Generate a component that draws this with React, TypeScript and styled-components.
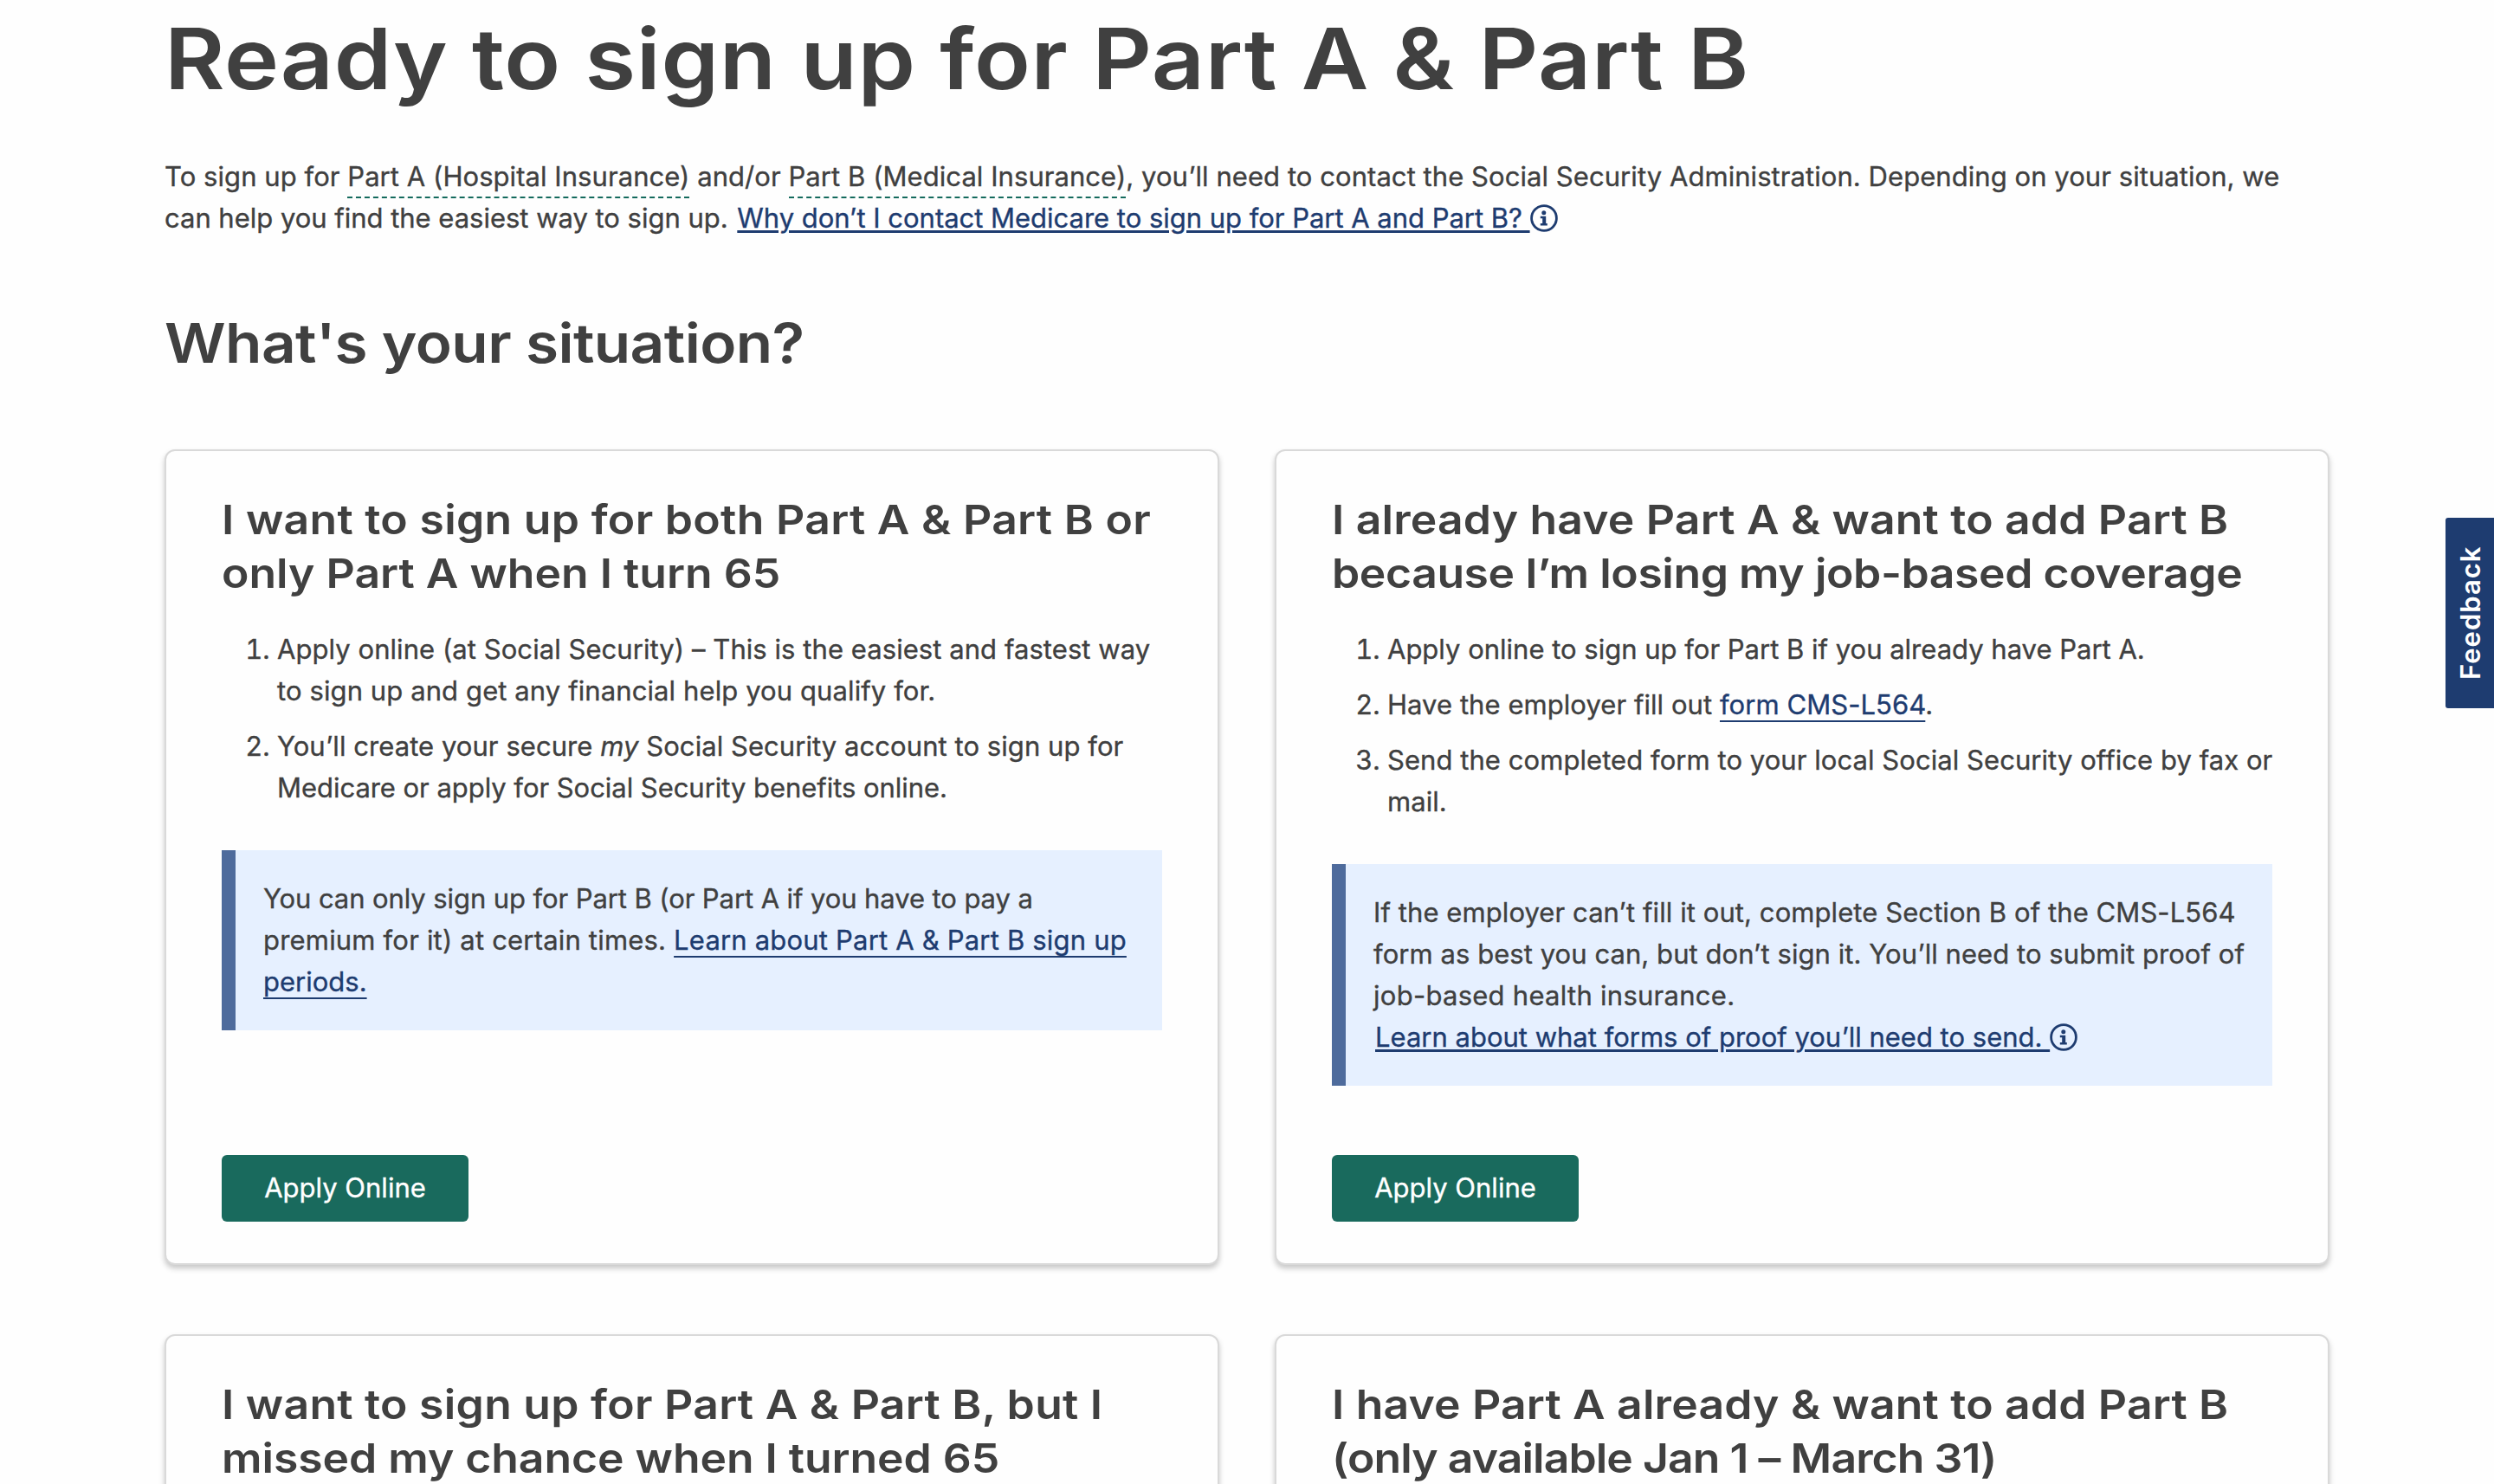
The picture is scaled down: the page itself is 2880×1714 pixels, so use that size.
import { ReactNode } from 'react';
import styled, { createGlobalStyle } from 'styled-components';

const GlobalStyle = createGlobalStyle`
  * {
    box-sizing: border-box;
  }

  body {
    margin: 0;
    background: #fefefe;
    color: #404040;
    font-family: Inter, 'Liberation Sans', sans-serif;
    font-size: 31px;
    line-height: 48px;
    -webkit-text-stroke: 0.35px;
  }
`;

const Page = styled.main`
  height: 1714px;
  padding: 0 190px;
  overflow: hidden;
`;

const Title = styled.h1`
  margin: 0;
  padding-top: 8px;
  font-size: 97px;
  font-weight: 600;
  line-height: 120px;
`;

const Intro = styled.p`
  margin: 52px 0 0;
`;

// every line breaks at a fixed place, $track is the letter spacing
const Line = styled.span<{ $track?: number }>`
  display: block;
  white-space: nowrap;
  letter-spacing: ${({ $track = 0.06 }) => $track}px;
`;

const HeadingLine = styled(Line)`
  transform: scaleX(1.1);
  transform-origin: left;
  -webkit-text-stroke: 0;
`;

const Term = styled.span`
  display: inline-block;
  height: 49px;
  margin-bottom: -1px;
  border-bottom: 2px dashed #146a5d;
`;

const TextLink = styled.a`
  color: #1e3c70;
  text-decoration: underline;
  text-decoration-thickness: 2px;
  text-underline-offset: 7px;
`;

const HelpLink = styled(TextLink)`
  margin-left: 2px;
  text-decoration-thickness: 3px;
  text-underline-offset: 3px;
`;

const InfoSvg = styled.svg`
  width: 32px;
  height: 32px;
  vertical-align: -5px;
`;

const Subtitle = styled.h2`
  margin: 80px 0 0;
  font-size: 63px;
  font-weight: 600;
  line-height: 80px;
`;

const Cards = styled.div`
  display: grid;
  grid-template-columns: repeat(2, minmax(0, 1fr));
  grid-template-rows: 942px 942px;
  gap: 80px 64px;
  margin-top: 83px;
`;

const Card = styled.section`
  display: flex;
  flex-direction: column;
  align-items: flex-start;
  padding: 48px 64px;
  background: #fefefe;
  border: 2px solid #d9d9d9;
  border-radius: 12px;
  box-shadow: 0 4px 6px rgba(0, 0, 0, 0.22);
`;

const CardTitle = styled.h3`
  margin: 0;
  font-size: 47px;
  font-weight: 600;
  line-height: 62px;
`;

const Steps = styled.ol`
  display: flex;
  flex-direction: column;
  gap: 16px;
  margin: 33px 0 0;
  padding: 0 0 0 64px;
`;

const Notice = styled.div`
  width: 100%;
  margin-top: 48px;
  padding: 32px;
  background: #e6f0ff;
  border-left: 16px solid #4e6b9c;
`;

const ApplyButton = styled.button`
  width: 285px;
  height: 77px;
  margin-top: auto;
  padding: 0 0 2px;
  background: #196a5d;
  border: none;
  border-radius: 6px;
  color: #fff;
  font: inherit;
`;

const Feedback = styled.button`
  position: absolute;
  top: 598px;
  right: 0;
  width: 56px;
  height: 220px;
  padding: 0;
  background: #1e3c70;
  border: none;
  border-radius: 0 3px 3px 0;
  color: #fff;
  font-family: inherit;
  font-size: 31px;
  font-weight: 600;
  letter-spacing: 1px;
  writing-mode: vertical-rl;
  rotate: 180deg;
  -webkit-text-stroke: 0;
`;

function InfoIcon() {
  return (
    <InfoSvg viewBox="0 0 32 32" fill="none" stroke="#1e3c70">
      <circle cx="16" cy="16" r="14.4" strokeWidth="2.8" />
      <circle cx="15.8" cy="9.8" r="2.5" fill="#1e3c70" stroke="none" />
      <path d="M11.8 13.8h6.4v8.2h1.6v2.4h-8v-2.4h2.4v-5.8h-2.4z" fill="#1e3c70" stroke="none" />
    </InfoSvg>
  );
}

type CardProps = {
  title: ReactNode;
  steps?: ReactNode[];
  notice?: ReactNode;
};

function SituationCard({ title, steps, notice }: CardProps) {
  return (
    <Card>
      <CardTitle>{title}</CardTitle>
      {steps && (
        <Steps>
          {steps.map((step, i) => (
            <li key={i}>{step}</li>
          ))}
        </Steps>
      )}
      {notice && <Notice>{notice}</Notice>}
      {notice && <ApplyButton>Apply Online</ApplyButton>}
    </Card>
  );
}

export default function App() {
  return (
    <>
      <GlobalStyle />
      <Page>
        <Title>
          <HeadingLine $track={0.63}>Ready to sign up for Part A &amp; Part B</HeadingLine>
        </Title>
        <Intro>
          <Line>
            To sign up for <Term>Part A (Hospital Insurance)</Term> and/or <Term>Part B (Medical Insurance)</Term>,
            you’ll need to contact the Social Security Administration. Depending on your situation, we
          </Line>
          <Line $track={-0.02}>
            can help you find the easiest way to sign up.{' '}
            <HelpLink>Why don’t I contact Medicare to sign up for Part A and Part B? </HelpLink>
            <InfoIcon />
          </Line>
        </Intro>
        <Subtitle>
          <HeadingLine $track={-0.55}>What's your situation?</HeadingLine>
        </Subtitle>
        <Cards>
          <SituationCard
            title={
              <>
                <HeadingLine $track={0.27}>I want to sign up for both Part A &amp; Part B or</HeadingLine>
                <HeadingLine $track={0}>only Part A when I turn 65</HeadingLine>
              </>
            }
            steps={[
              <>
                <Line>Apply online (at Social Security) – This is the easiest and fastest way</Line>
                <Line $track={0.1}>to sign up and get any financial help you qualify for.</Line>
              </>,
              <>
                <Line>
                  You’ll create your secure <i>my</i> Social Security account to sign up for
                </Line>
                <Line $track={-0.04}>Medicare or apply for Social Security benefits online.</Line>
              </>,
            ]}
            notice={
              <>
                <Line $track={-0.09}>You can only sign up for Part B (or Part A if you have to pay a</Line>
                <Line $track={0.19}>
                  premium for it) at certain times. <TextLink>Learn about Part A &amp; Part B sign up</TextLink>
                </Line>
                <Line $track={0}>
                  <TextLink>periods.</TextLink>
                </Line>
              </>
            }
          />
          <SituationCard
            title={
              <>
                <HeadingLine $track={0.15}>I already have Part A &amp; want to add Part B</HeadingLine>
                <HeadingLine $track={-0.4}>because I’m losing my job-based coverage</HeadingLine>
              </>
            }
            steps={[
              <Line $track={0}>Apply online to sign up for Part B if you already have Part A.</Line>,
              <Line>
                Have the employer fill out <TextLink>form CMS-L564</TextLink>.
              </Line>,
              <>
                <Line>Send the completed form to your local Social Security office by fax or</Line>
                <Line>mail.</Line>
              </>,
            ]}
            notice={
              <>
                <Line $track={0.08}>If the employer can’t fill it out, complete Section B of the CMS-L564</Line>
                <Line>form as best you can, but don’t sign it. You’ll need to submit proof of</Line>
                <Line $track={0.27}>job-based health insurance.</Line>
                <Line $track={0}>
                  <HelpLink>Learn about what forms of proof you’ll need to send. </HelpLink>
                  <InfoIcon />
                </Line>
              </>
            }
          />
          <SituationCard
            title={
              <>
                <HeadingLine $track={0.24}>I want to sign up for Part A &amp; Part B, but I</HeadingLine>
                <HeadingLine $track={-0.06}>missed my chance when I turned 65</HeadingLine>
              </>
            }
          />
          <SituationCard
            title={
              <>
                <HeadingLine $track={0.15}>I have Part A already &amp; want to add Part B</HeadingLine>
                <HeadingLine $track={-0.85}>(only available Jan 1 – March 31)</HeadingLine>
              </>
            }
          />
        </Cards>
      </Page>
      <Feedback>Feedback</Feedback>
    </>
  );
}
